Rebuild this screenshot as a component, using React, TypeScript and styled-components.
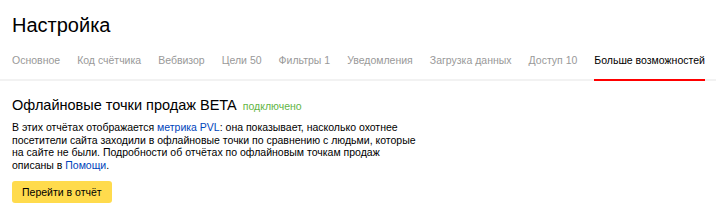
import styled, { createGlobalStyle } from "styled-components";

const GlobalStyle = createGlobalStyle`
  body {
    margin: 0;
    background: #fff;
    font-family: "Liberation Sans", Arial, sans-serif;
    color: #000;
  }
`;

const Page = styled.div`
  width: 716px;
  height: 212px;
  overflow: hidden;
`;

const Title = styled.h1`
  margin: 0;
  padding: 13px 12px 0;
  font-size: 20px;
  line-height: 24px;
  font-weight: 400;
`;

const Tabs = styled.nav`
  display: flex;
  gap: 17px;
  margin-top: 16px;
  padding: 0 12px;
  border-bottom: 2px solid #f2f2f2;
`;

const Tab = styled.a<{ $active?: boolean }>`
  margin-bottom: -2px;
  padding-bottom: 12px;
  border-bottom: 2px solid ${(p) => (p.$active ? "#f00" : "transparent")};
  font-size: 10.5px;
  line-height: 14px;
  color: ${(p) => (p.$active ? "#000" : "#999")};
  white-space: nowrap;
  cursor: pointer;
`;

const Section = styled.section`
  padding: 15px 12px 0;
`;

const SectionHead = styled.div`
  display: flex;
  align-items: baseline;
  gap: 6px;
`;

const SectionTitle = styled.h2`
  margin: 0;
  font-size: 14.5px;
  line-height: 18px;
  font-weight: 400;
`;

const Status = styled.span`
  font-size: 10.5px;
  color: #62b545;
`;

const Text = styled.p`
  max-width: 410px;
  margin: 7px 0 0;
  font-size: 10.5px;
  line-height: 12.5px;
`;

const Link = styled.a`
  color: #04b;
  text-decoration: none;
  cursor: pointer;
`;

const Button = styled.button`
  height: 22px;
  margin-top: 10px;
  padding: 0 10px;
  border: 0;
  border-radius: 3px;
  background: #ffdb4d;
  font-family: inherit;
  font-size: 10.5px;
  color: #000;
  cursor: pointer;
`;

const tabs = [
  { label: "Основное" },
  { label: "Код счётчика" },
  { label: "Вебвизор" },
  { label: "Цели 50" },
  { label: "Фильтры 1" },
  { label: "Уведомления" },
  { label: "Загрузка данных" },
  { label: "Доступ 10" },
  { label: "Больше возможностей", active: true },
];

export default function App() {
  return (
    <Page>
      <GlobalStyle />
      <Title>Настройка</Title>
      <Tabs>
        {tabs.map((t) => (
          <Tab key={t.label} $active={t.active}>
            {t.label}
          </Tab>
        ))}
      </Tabs>
      <Section>
        <SectionHead>
          <SectionTitle>Офлайновые точки продаж BETA</SectionTitle>
          <Status>подключено</Status>
        </SectionHead>
        <Text>
          В этих отчётах отображается <Link>метрика PVL</Link>: она показывает,
          насколько охотнее посетители сайта заходили в офлайновые точки по
          сравнению с людьми, которые на сайте не были. Подробности об отчётах
          по офлайновым точкам продаж описаны в <Link>Помощи</Link>.
        </Text>
        <Button>Перейти в отчёт</Button>
      </Section>
    </Page>
  );
}
